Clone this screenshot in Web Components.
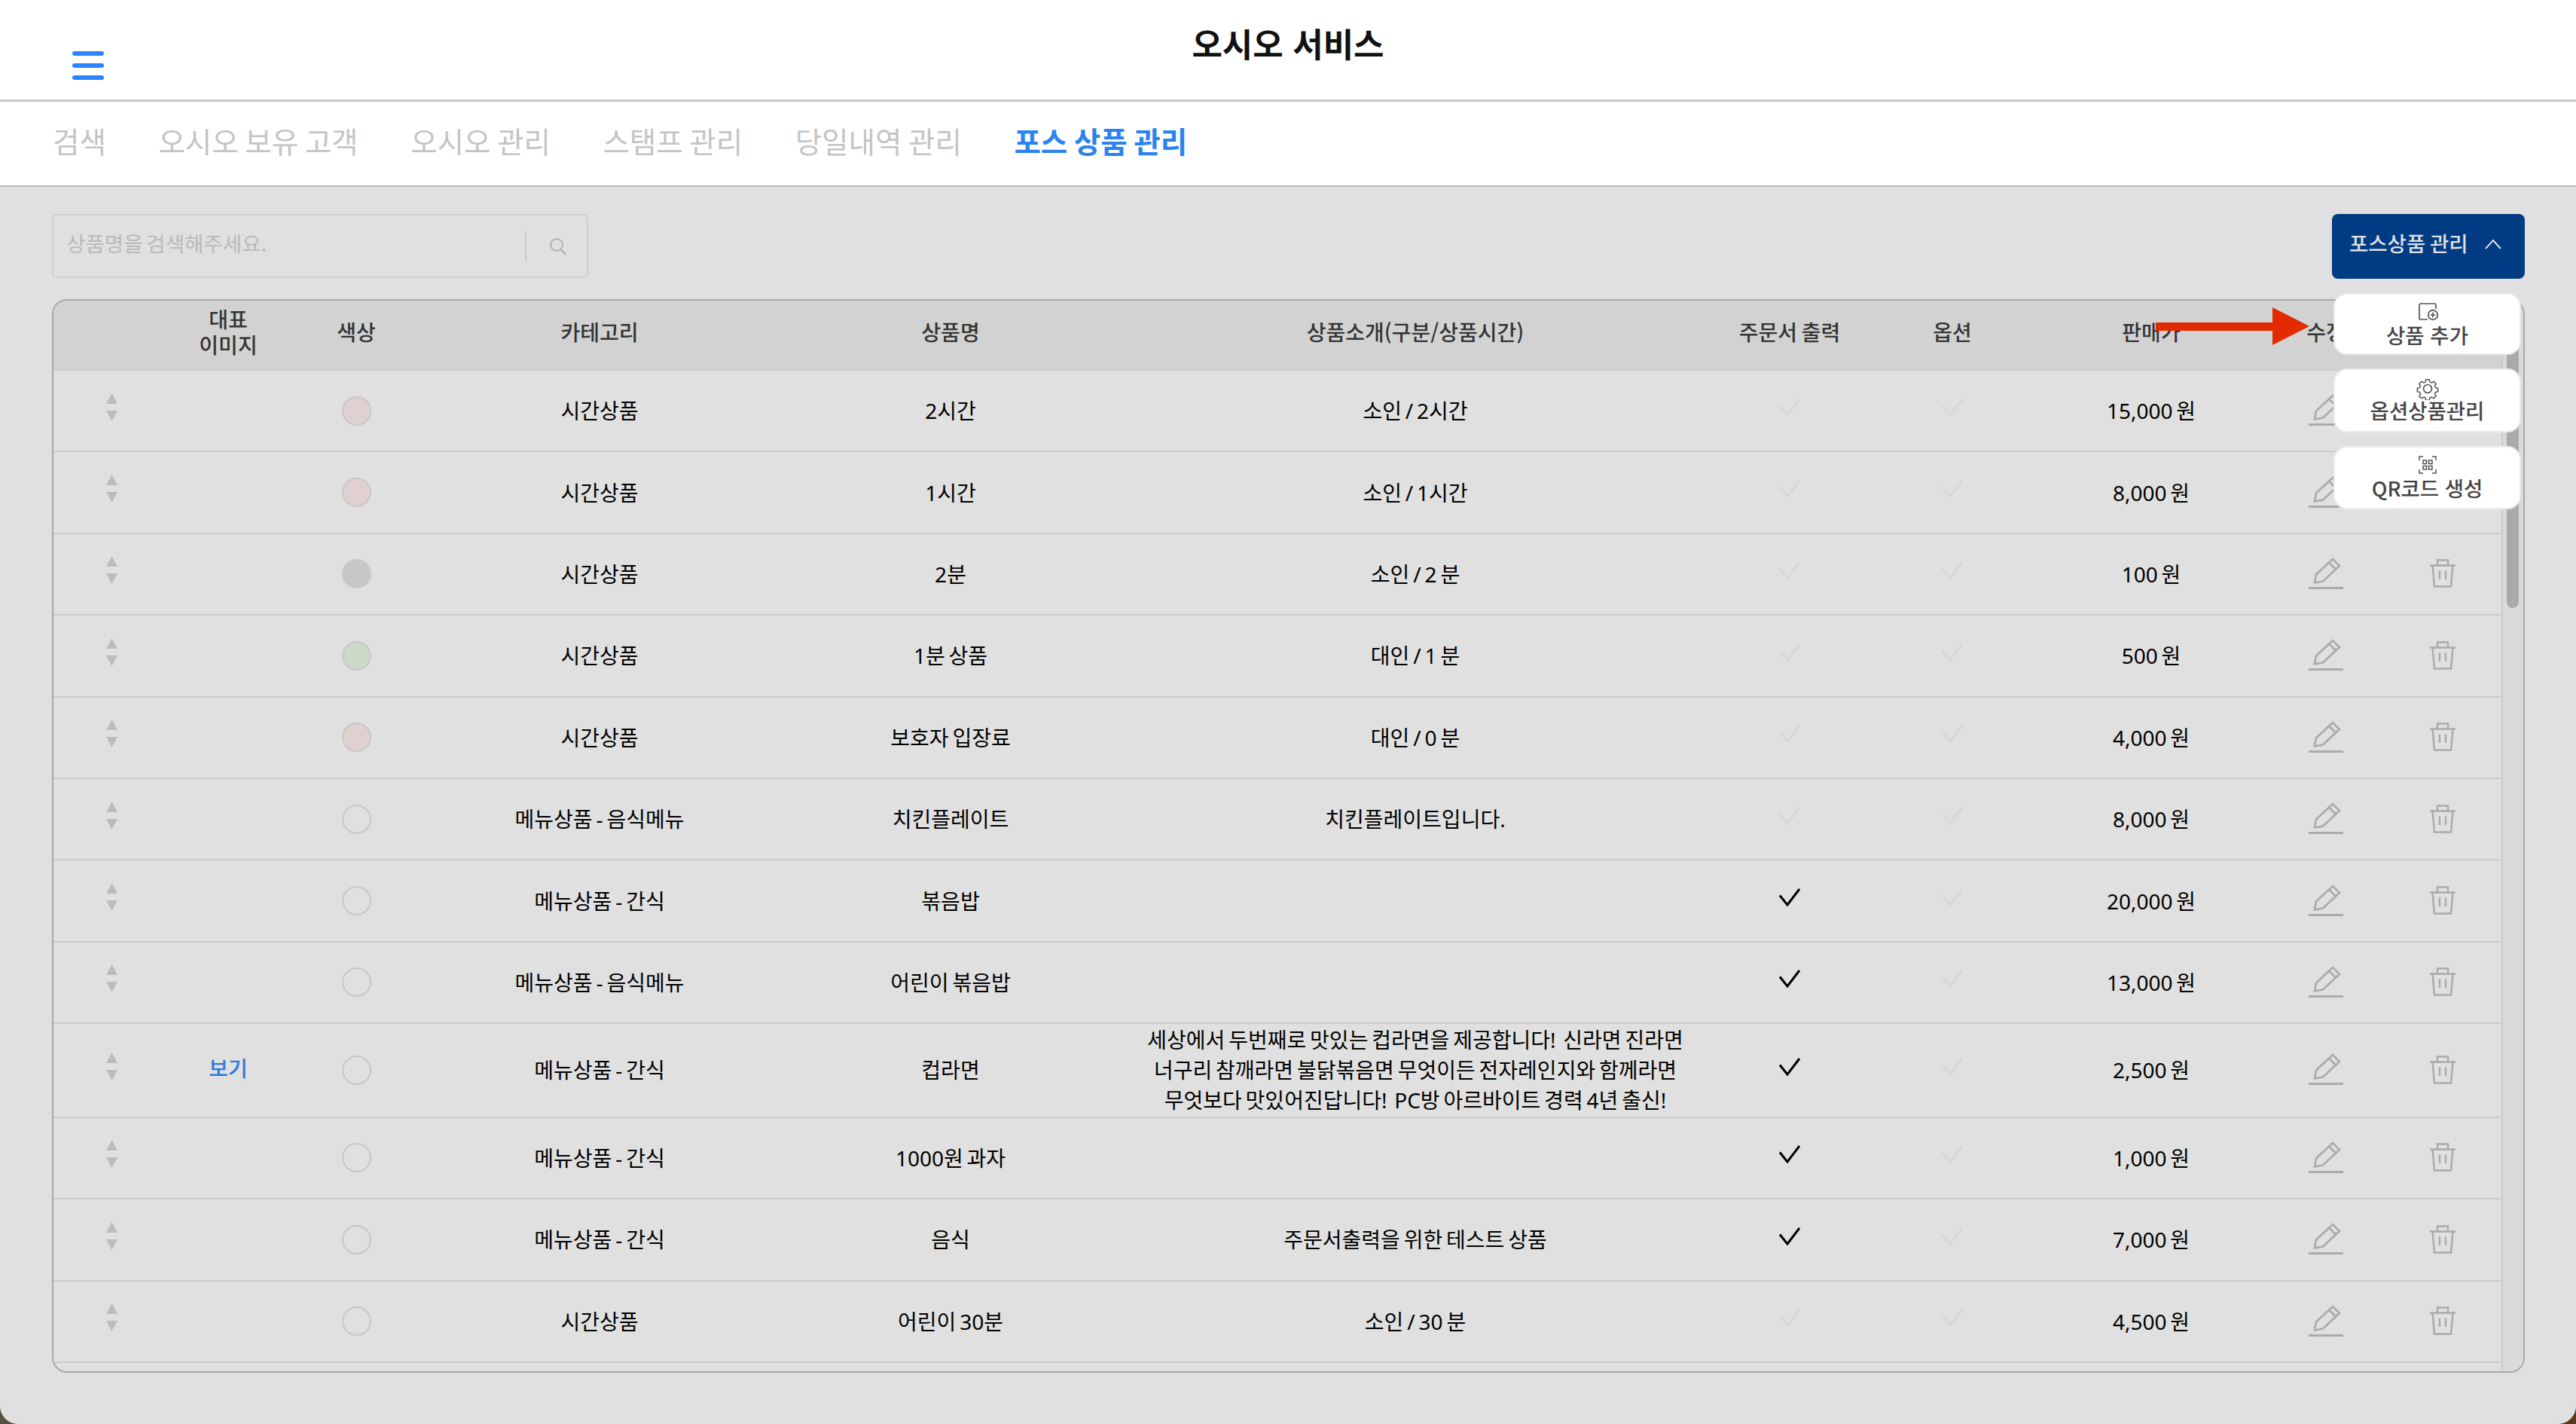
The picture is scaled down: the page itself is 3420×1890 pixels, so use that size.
<!DOCTYPE html>
<html lang="ko">
<head>
<meta charset="utf-8">
<title>오시오 서비스</title>
<style>
  html, body { margin: 0; height: 100%; }
  body {
    background: linear-gradient(90deg, #55513f 0%, #5a3a1c 100%);
    font-family: "Noto Sans CJK KR", "Noto Sans", sans-serif;
    overflow: hidden;
  }
</style>
</head>
<body>

<template id="pos-app-template">
  <style>
    :host { display: flex; flex-direction: column; height: 1890px; background: #fff; border-radius: 0 0 24px 24px; overflow: hidden; }
    main { position: relative; flex: 1; min-height: 0; display: flex; flex-direction: column; gap: 27px; padding: 36px 68px 68px 69px; }
    .toolbar { display: flex; justify-content: space-between; align-items: flex-start; }
    .backdrop { position: absolute; inset: 0; background: rgba(0, 0, 0, 0.12); z-index: 5; }
    .arrow { position: absolute; left: 2862px; top: 160px; z-index: 20; display: block; }
  </style>
  <app-header>오시오 서비스</app-header>
  <tab-bar>
    <tab-item>검색</tab-item>
    <tab-item>오시오 보유 고객</tab-item>
    <tab-item>오시오 관리</tab-item>
    <tab-item>스탬프 관리</tab-item>
    <tab-item>당일내역 관리</tab-item>
    <tab-item active>포스 상품 관리</tab-item>
  </tab-bar>
  <main>
    <div class="toolbar">
      <search-box placeholder="상품명을 검색해주세요."></search-box>
      <pos-dropdown label="포스상품 관리">
        <menu-item icon="add" style="height: 82px">상품 추가</menu-item>
        <menu-item icon="gear" style="height: 85px">옵션상품관리</menu-item>
        <menu-item icon="qr" style="height: 84px">QR코드 생성</menu-item>
      </pos-dropdown>
    </div>
    <product-table>
      <product-row color="pink" category="시간상품" name="2시간" price="15,000 원">소인 / 2시간</product-row>
      <product-row color="pink" category="시간상품" name="1시간" price="8,000 원">소인 / 1시간</product-row>
      <product-row color="gray" category="시간상품" name="2분" price="100 원">소인 / 2 분</product-row>
      <product-row color="green" category="시간상품" name="1분 상품" price="500 원">대인 / 1 분</product-row>
      <product-row color="pink" category="시간상품" name="보호자 입장료" price="4,000 원">대인 / 0 분</product-row>
      <product-row category="메뉴상품 - 음식메뉴" name="치킨플레이트" price="8,000 원">치킨플레이트입니다.</product-row>
      <product-row printed category="메뉴상품 - 간식" name="볶음밥" price="20,000 원"></product-row>
      <product-row printed category="메뉴상품 - 음식메뉴" name="어린이 볶음밥" price="13,000 원"></product-row>
      <product-row printed tall image category="메뉴상품 - 간식" name="컵라면" price="2,500 원">세상에서 두번째로 맛있는 컵라면을 제공합니다!&nbsp; 신라면 진라면<br>너구리 참깨라면 불닭볶음면 무엇이든 전자레인지와 함께라면<br>무엇보다 맛있어진답니다!&nbsp; PC방 아르바이트 경력 4년 출신!</product-row>
      <product-row printed category="메뉴상품 - 간식" name="1000원 과자" price="1,000 원"></product-row>
      <product-row printed category="메뉴상품 - 간식" name="음식" price="7,000 원">주문서출력을 위한 테스트 상품</product-row>
      <product-row category="시간상품" name="어린이 30분" price="4,500 원">소인 / 30 분</product-row>
    </product-table>
    <div class="backdrop"></div>
    <svg class="arrow" width="204" height="50" viewBox="0 0 204 50"><path d="M0 20H155V0L204 25L155 50V31H0Z" fill="#e32a00"/></svg>
  </main>
</template>

<template id="app-header-template">
  <style>
    :host { display: grid; grid-template-columns: 1fr auto 1fr; height: 135px; box-sizing: border-box; border-bottom: 3px solid #c9c9d2; flex: none; background: #fff; }
    .menu { align-self: end; margin: 0 0 26px 96px; width: 42px; display: flex; flex-direction: column; gap: 10px; }
    .menu i { display: block; height: 6px; border-radius: 3px; background: #2a85ff; }
    h1 { margin: 26px 0 0; font-size: 44px; line-height: 62px; font-weight: 700; color: #111; align-self: start; }
  </style>
  <div class="menu"><i></i><i></i><i></i></div>
  <h1><slot></slot></h1>
</template>

<template id="tab-bar-template">
  <style>
    :host { display: flex; gap: 69.6px; align-items: center; height: 113px; box-sizing: border-box; padding: 0 0 10px 70px; border-bottom: 2px solid #b9b9b9; flex: none; background: #fff; }
  </style>
  <slot></slot>
</template>

<template id="tab-item-template">
  <style>
    :host { display: block; font-size: 38.5px; line-height: 56px; word-spacing: -2.2px; color: #c4c4c4; white-space: nowrap; }
    :host([active]) { color: #2a83f0; font-weight: 700; }
  </style>
  <slot></slot>
</template>

<template id="search-box-template">
  <style>
    :host { display: flex; align-items: center; width: 712px; height: 85px; box-sizing: border-box; border: 2px solid #ececec; border-radius: 6px; padding: 0 26px 0 17px; }
    .text { flex: 1; font-size: 27.6px; word-spacing: -3px; color: #d4d4d4; padding-bottom: 9px; }
    .sep { width: 2px; height: 40px; background: #e6e6e6; margin-right: 30px; }
    svg { display: block; }
  </style>
  <span class="text"></span>
  <span class="sep"></span>
  <svg width="24" height="24" viewBox="0 0 24 24" fill="none" stroke="#c8c8c8" stroke-width="2"><circle cx="10" cy="10" r="8"/><path d="M15.5 16L22 23"/></svg>
</template>

<template id="pos-dropdown-template">
  <style>
    :host { display: block; position: relative; width: 256px; }
    button { display: flex; align-items: center; width: 100%; height: 86px; padding: 0 0 10px 23px; border: 0; border-radius: 8px; background: #014496; color: #fff; font: 500 27.5px/40px "Noto Sans CJK KR", "Noto Sans", sans-serif; word-spacing: -2px; }
    svg { margin: 4px 0 0 22px; }
    .menu { position: absolute; left: 2px; top: 105px; width: 249px; display: flex; flex-direction: column; gap: 18px; z-index: 10; }
  </style>
  <button><span class="label"></span><svg width="22" height="14" viewBox="0 0 22 14" fill="none" stroke="#fff" stroke-width="2"><path d="M1 13L11 2L21 13"/></svg></button>
  <div class="menu"><slot></slot></div>
</template>

<template id="menu-item-template">
  <style>
    :host { display: flex; flex-direction: column; align-items: center; box-sizing: border-box; background: #fff; border: 2px solid #ececec; border-radius: 18px; padding-top: 11px; font-size: 27.5px; line-height: 36px; font-weight: 500; color: #454545; white-space: nowrap; }
    .icon { height: 24px; display: flex; align-items: center; justify-content: center; }
    svg { display: block; }
  </style>
  <div class="icon"></div>
  <div><slot></slot></div>
</template>

<template id="product-table-template">
  <style>
    :host {
      display: flex; flex: 1; min-height: 0; border: 2px solid #c0c0c0; border-radius: 20px; overflow: hidden; background: #fff;
      --cols: 154px 156px 184px 462px 470px 764px 230px 202px 326px 138px 165px;
    }
    .list { flex: 1; min-width: 0; overflow: hidden; }
    .head { display: grid; grid-template-columns: var(--cols); height: 93px; box-sizing: border-box; padding-bottom: 10px; background: #f0f0f0; border-bottom: 2px solid #e7e7e7; align-items: center; text-align: center; font-size: 28px; line-height: 34px; font-weight: 500; word-spacing: -2px; color: #3c3c3c; }
    .head span:last-child { padding-left: 7px; }
    .track { flex: none; width: 29px; box-sizing: border-box; background: #f9f9f9; border-left: 2px solid #e7e7e7; padding: 6px 0 0 5px; }
    .thumb { width: 16px; height: 402px; border-radius: 8px; background: #c2c2c2; }
  </style>
  <div class="list">
    <div class="head">
      <span></span><span>대표<br>이미지</span><span>색상</span><span>카테고리</span><span>상품명</span><span>상품소개(구분/상품시간)</span><span>주문서 출력</span><span>옵션</span><span>판매가</span><span>수정</span><span>삭제</span>
    </div>
    <slot></slot>
  </div>
  <div class="track"><div class="thumb"></div></div>
</template>

<template id="product-row-template">
  <style>
    :host { display: grid; grid-template-columns: var(--cols); height: 108.4px; box-sizing: border-box; border-bottom: 2px solid #e7e7e7; align-items: center; justify-items: center; text-align: center; font-family: "Noto Sans", "Noto Sans CJK KR", sans-serif; font-size: 28px; line-height: 40px; word-spacing: -2.4px; color: #000; background: #fff; }
    :host([tall]) { height: 124.6px; }
    svg { display: block; }
    .up { margin-top: -10px; }
    .dot { width: 39px; height: 39px; box-sizing: border-box; border-radius: 50%; border: 2px solid #e3e3e3; }
    :host([color="pink"]) .dot { background: #ffeded; }
    :host([color="gray"]) .dot { background: #e3e3e3; }
    :host([color="green"]) .dot { background: #e9f7e3; }
    .link { color: #3088ff; font-weight: 500; margin-top: -4px; }
    .check { margin-top: -9px; stroke: #f5f5f5; }
    :host([printed]) .order { stroke: #000; }
    .edit { margin-top: -2px; }
    .trash { margin: -1px 0 0 7px; }
    .desc { white-space: nowrap; }
  </style>
  <svg class="up" width="15" height="37" viewBox="0 0 15 37" fill="#d7d7d7"><path d="M7.5 0L15 14H0Z"/><path d="M0 23H15L7.5 37Z"/></svg>
  <span class="link"></span>
  <span class="dot"></span>
  <span class="category"></span>
  <span class="name"></span>
  <span class="desc"><slot></slot></span>
  <svg class="check order" width="28" height="24" viewBox="0 0 28 24" fill="none" stroke-width="3"><path d="M1 9.5L11 22L27 1"/></svg>
  <svg class="check" width="28" height="24" viewBox="0 0 28 24" fill="none" stroke-width="3"><path d="M1 9.5L11 22L27 1"/></svg>
  <span class="price"></span>
  <svg class="edit" width="46" height="42" viewBox="0 0 46 42" fill="none" stroke="#c2c2c2" stroke-width="2.6"><path d="M8 33.5L10 22.5L32 2L41 11L19 31.5Z"/><path d="M27 6.5L36 15.5"/><path d="M0 40.5H46" stroke-width="3"/></svg>
  <svg class="trash" width="34" height="38" viewBox="0 0 34 38" fill="none" stroke="#c2c2c2" stroke-width="2.4"><path d="M10 8V1.5H24V8"/><path d="M0 8.5H34"/><path d="M3.5 8.5L6 36.5H28L30.5 8.5"/><path d="M13 15.5V27M21 15.5V27"/></svg>
</template>

<script>
  'use strict';
  const fromTemplate = (el, id) => {
    el.attachShadow({mode: 'open'});
    el.shadowRoot.appendChild(document.getElementById(id).content.cloneNode(true));
    return el.shadowRoot;
  };

  // menu icons are small, keep them in one place
  const menuIcons = {
    add: '<svg width="28" height="24" viewBox="0 0 28 24" fill="none" stroke="#555" stroke-width="1.7"><path d="M14 22H5a2 2 0 0 1-2-2V3a2 2 0 0 1 2-2h18a2 2 0 0 1 2 2v5"/><circle cx="21" cy="16" r="6.3"/><path d="M21 12.5v7M17.5 16h7"/></svg>',
    gear: '<svg width="30" height="30" viewBox="0 0 30 30" fill="none" stroke="#555" stroke-width="1.7" stroke-linejoin="round" style="margin-top:4px"><path d="M12.5 1.5h5l.8 3.6 2.6 1.1 3.1-2 3.5 3.5-2 3.1 1.1 2.6 3.6.8v5l-3.6.8-1.1 2.6 2 3.1-3.5 3.5-3.1-2-2.6 1.1-.8 3.6h-5l-.8-3.6-2.6-1.1-3.1 2-3.5-3.5 2-3.1-1.1-2.6-3.6-.8v-5l3.6-.8 1.1-2.6-2-3.1 3.5-3.5 3.1 2 2.6-1.1z" transform="translate(1.5 1.5) scale(.9)"/><circle cx="15" cy="15" r="5.5"/></svg>',
    qr: '<svg width="24" height="24" viewBox="0 0 24 24" fill="none" stroke="#555" stroke-width="1.5"><path d="M1 6V1H6M18 1H23V6M23 18V23H18M6 23H1V18"/><rect x="6" y="6" width="4.5" height="4.5"/><rect x="13.5" y="6" width="4.5" height="4.5"/><rect x="6" y="13.5" width="4.5" height="4.5"/><rect x="13.5" y="13.5" width="4.5" height="4.5"/></svg>'
  };

  class PosApp extends HTMLElement {
    constructor() { super(); fromTemplate(this, 'pos-app-template'); }
  }
  class AppHeader extends HTMLElement {
    constructor() { super(); fromTemplate(this, 'app-header-template'); }
  }
  class TabBar extends HTMLElement {
    constructor() { super(); fromTemplate(this, 'tab-bar-template'); }
  }
  class TabItem extends HTMLElement {
    constructor() { super(); fromTemplate(this, 'tab-item-template'); }
  }
  class SearchBox extends HTMLElement {
    constructor() { super(); fromTemplate(this, 'search-box-template'); }
    connectedCallback() {
      this.shadowRoot.querySelector('.text').textContent = this.getAttribute('placeholder');
    }
  }
  class PosDropdown extends HTMLElement {
    constructor() { super(); fromTemplate(this, 'pos-dropdown-template'); }
    connectedCallback() {
      this.shadowRoot.querySelector('.label').textContent = this.getAttribute('label');
    }
  }
  class MenuItem extends HTMLElement {
    constructor() { super(); fromTemplate(this, 'menu-item-template'); }
    connectedCallback() {
      this.shadowRoot.querySelector('.icon').innerHTML = menuIcons[this.getAttribute('icon')];
    }
  }
  class ProductTable extends HTMLElement {
    constructor() { super(); fromTemplate(this, 'product-table-template'); }
  }
  class ProductRow extends HTMLElement {
    constructor() { super(); fromTemplate(this, 'product-row-template'); }
    connectedCallback() {
      const root = this.shadowRoot;
      root.querySelector('.category').textContent = this.getAttribute('category');
      root.querySelector('.name').textContent = this.getAttribute('name');
      root.querySelector('.price').textContent = this.getAttribute('price');
      root.querySelector('.link').textContent = this.hasAttribute('image') ? '보기' : '';
    }
  }

  customElements.define('app-header', AppHeader);
  customElements.define('tab-bar', TabBar);
  customElements.define('tab-item', TabItem);
  customElements.define('search-box', SearchBox);
  customElements.define('pos-dropdown', PosDropdown);
  customElements.define('menu-item', MenuItem);
  customElements.define('product-table', ProductTable);
  customElements.define('product-row', ProductRow);
  customElements.define('pos-app', PosApp);
</script>

<pos-app></pos-app>
</body>
</html>
